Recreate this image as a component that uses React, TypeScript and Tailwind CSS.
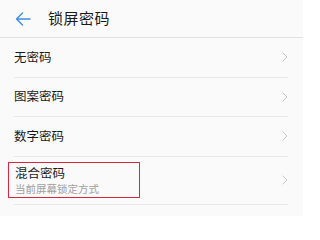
import { ChevronRight } from "lucide-react";

const font = { fontFamily: '"Noto Sans CJK SC", "Noto Sans", sans-serif' };

interface Option {
    label: string;
    hint?: string;
    selected?: boolean;
}

const options: Option[] = [
    { label: "无密码" },
    { label: "图案密码" },
    { label: "数字密码" },
    { label: "混合密码", hint: "当前屏幕锁定方式", selected: true },
];

export default function App() {
    return (
        <div style={font} className="w-[303px] h-[216px] bg-[#fafafa] overflow-hidden">

            {/* Header */}
            <div className="flex items-center h-[38px] border-b-[1.5px] border-[#e2e2e2]">
                <svg width="16" height="14" viewBox="0 0 16 14" className="ml-[15px]" fill="none">
                    <path d="M15 7H1.5M7.5 1L1.5 7l6 6" stroke="#3b8ee6" strokeWidth="1.4" strokeLinecap="round" strokeLinejoin="round" />
                </svg>
                <h1 className="ml-[17px] text-[15px] text-[#1a1a1a] tracking-[0.5px]">锁屏密码</h1>
            </div>

            {/* Options */}
            <div className="flex flex-col">
                {options.map((option, index) => (
                    <div key={index} className={`flex items-center ml-[14px] mr-[15px] border-b border-[#e8e8e8] ${option.hint ? "h-[48px]" : "h-[39.5px]"}`}>
                        {option.selected ? (
                            <div className="-ml-[6px] pl-[6px] w-[132px] h-[36px] border-[1.5px] border-[#d8283f] flex flex-col justify-center">
                                <p className="text-[12.5px] leading-[17px] text-[#1a1a1a]">{option.label}</p>
                                <p className="text-[10.5px] leading-[15px] text-[#a0a0a0]">{option.hint}</p>
                            </div>
                        ) : (
                            <p className="text-[12.5px] text-[#1a1a1a]">{option.label}</p>
                        )}
                        <ChevronRight className="ml-auto -mr-[5px] text-[#bdbdbd]" size={16} strokeWidth={1.3} />
                    </div>
                ))}
            </div>

        </div>
    );
}
